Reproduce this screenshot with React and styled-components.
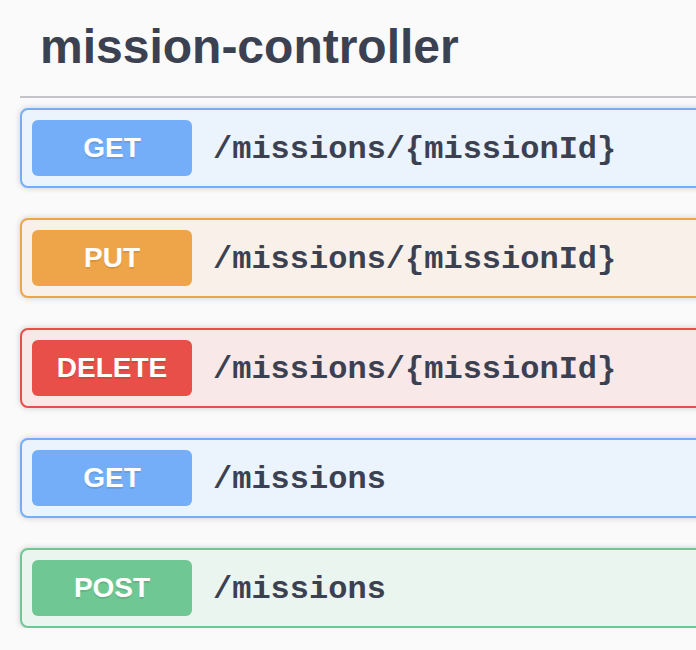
import styled, { createGlobalStyle } from 'styled-components';

const GlobalStyle = createGlobalStyle`
  html, body {
    margin: 0;
    background: #fafafa;
    overflow: hidden;
  }
`;

const methods = {
  get: { main: '#74aef8', bg: '#ebf3fc' },
  put: { main: '#eea549', bg: '#f9f1e9' },
  delete: { main: '#e84f48', bg: '#f8e8e7' },
  post: { main: '#6fc794', bg: '#ebf5f0' },
};

const App = () => {
  const operations = [
    { method: 'get', path: '/missions/{missionId}' },
    { method: 'put', path: '/missions/{missionId}' },
    { method: 'delete', path: '/missions/{missionId}' },
    { method: 'get', path: '/missions' },
    { method: 'post', path: '/missions' },
  ];
  return (
    <>
      <GlobalStyle />
      <Section>
        <Tag>mission-controller</Tag>
        <List>
          {operations.map(({ method, path }, i) => (
            <OpBlock key={i} $method={method}>
              <Method $method={method}>{method.toUpperCase()}</Method>
              <Path>{path}</Path>
            </OpBlock>
          ))}
        </List>
      </Section>
    </>
  );
};

export default App;

const Section = styled.section`
  width: 780px;
  padding-left: 20px;
  font-family: 'Liberation Sans', Arial, sans-serif;
  color: #3b4151;
`;

const Tag = styled.h4`
  margin: 0;
  padding: 18px 0 20px 20px;
  font-size: 48px;
  line-height: 58px;
  font-weight: 700;
  border-bottom: 2px solid #c4c4c8;
`;

const List = styled.div`
  display: flex;
  flex-direction: column;
  gap: 30px;
  margin-top: 10px;
`;

const OpBlock = styled.div`
  display: flex;
  align-items: center;
  height: 80px;
  box-sizing: border-box;
  padding: 10px;
  border: 2px solid ${({ $method }) => methods[$method].main};
  border-radius: 8px;
  background: ${({ $method }) => methods[$method].bg};
  box-shadow: 0 0 6px rgba(0, 0, 0, 0.19);
`;

const Method = styled.span`
  width: 160px;
  height: 56px;
  flex-shrink: 0;
  display: flex;
  align-items: center;
  justify-content: center;
  border-radius: 6px;
  background: ${({ $method }) => methods[$method].main};
  color: #fff;
  font-size: 28px;
  font-weight: 700;
  text-shadow: 0 2px 0 rgba(0, 0, 0, 0.1);
`;

const Path = styled.span`
  padding: 2px 20px 0 21px;
  font-family: 'Liberation Mono', 'Courier New', monospace;
  font-size: 32px;
  font-weight: 700;
  color: #3b4151;
`;
